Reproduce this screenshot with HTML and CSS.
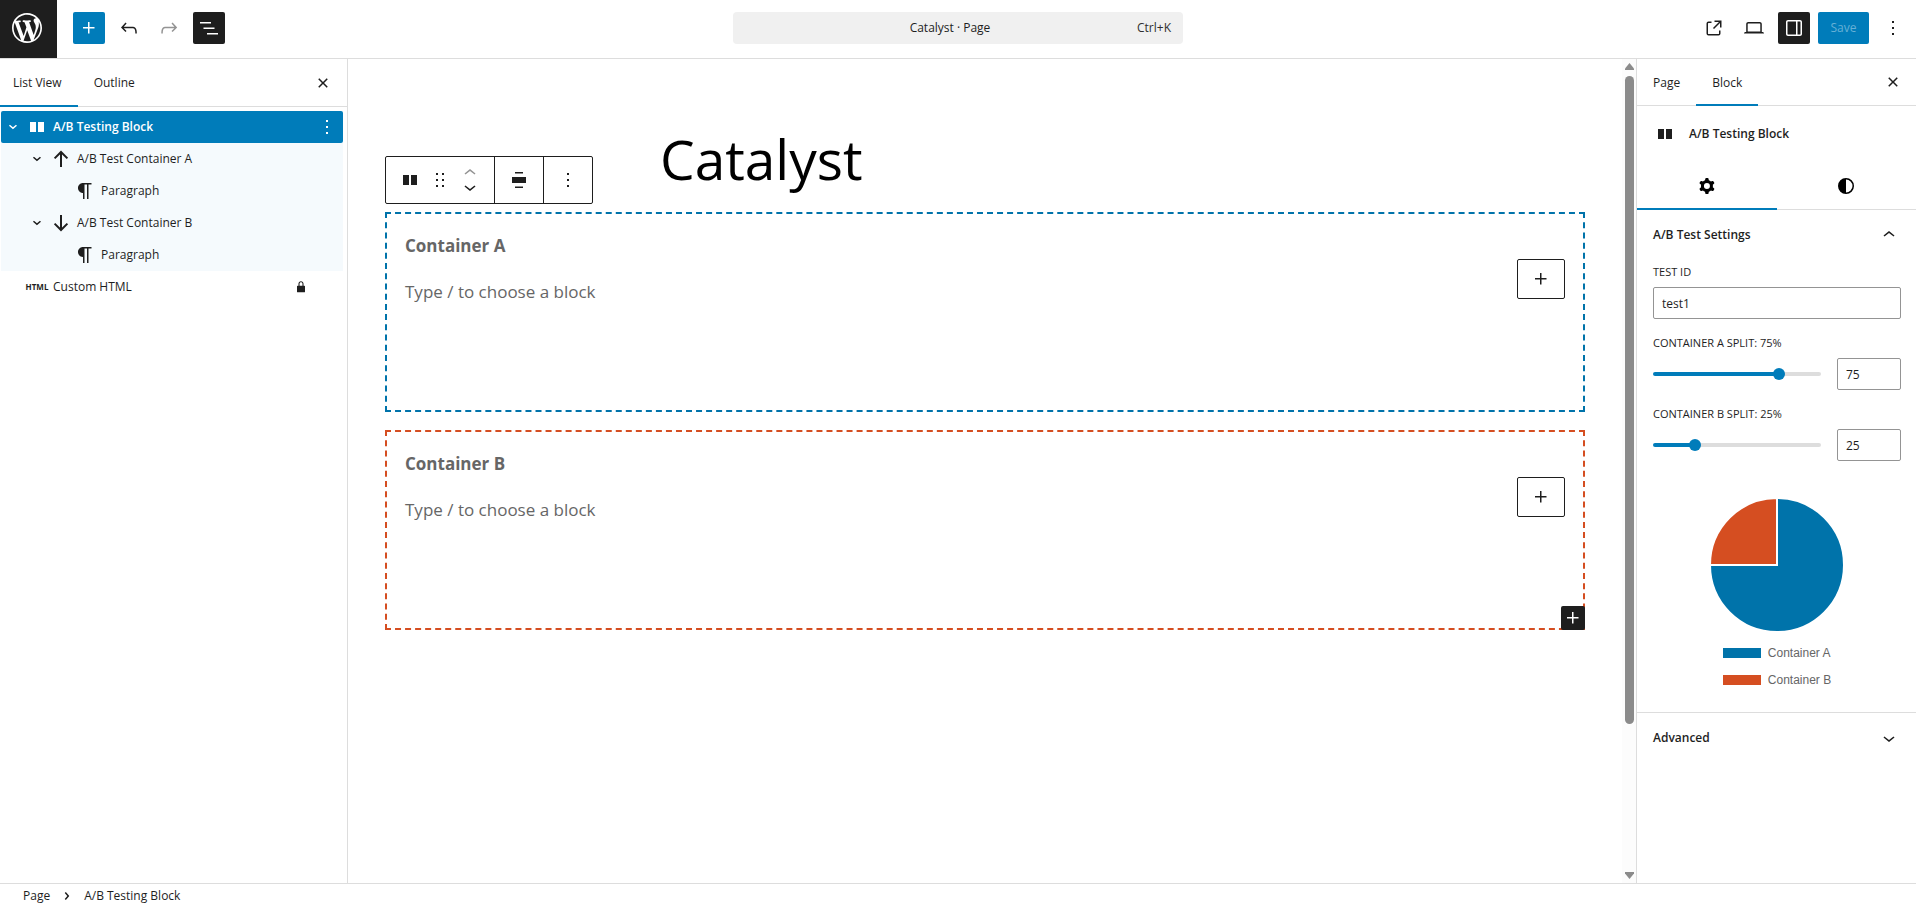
FILE: index.html
```
<!DOCTYPE html>
<html lang="en">
<head>
    <meta charset="UTF-8">
    <meta name="viewport" content="width=device-width, initial-scale=1.0">
    <title>Catalyst</title>
    <link rel="stylesheet" href="styles.css">
</head>
<body>
    <svg class="sprite" aria-hidden="true">
        <symbol id="plus" viewBox="0 0 24 24"><path d="M11 12.5V17.5H12.5V12.5H17.5V11H12.5V6H11V11H6V12.5H11Z"/></symbol>
        <symbol id="more" viewBox="0 0 24 24"><path d="M13 19h-2v-2h2v2zm0-6h-2v-2h2v2zm0-6h-2V5h2v2z"/></symbol>
        <symbol id="close" viewBox="0 0 24 24"><path d="M12 13.06l3.712 3.713 1.061-1.06L13.061 12l3.712-3.712-1.06-1.06L12 10.938 8.288 7.227l-1.061 1.06L10.939 12l-3.712 3.712 1.06 1.061L12 13.061z"/></symbol>
        <symbol id="columns" viewBox="0 0 20 20"><path d="M3 15h6V5H3v10zm8 0h6V5h-6v10z"/></symbol>
        <symbol id="paragraph" viewBox="0 0 24 24"><path d="m9.99609 14v-.2251l.00391.0001v6.225h1.5v-14.5h2.5v14.5h1.5v-14.5h3v-1.5h-8.50391c-2.76142 0-5 2.23858-5 5 0 2.7614 2.23858 5 5 5z"/></symbol>
        <symbol id="chevron-small" viewBox="0 0 24 24"><path d="M10.8622 8.04053L14.2805 12.0286L10.8622 16.0167L9.72327 15.0405L12.3049 12.0286L9.72327 9.01672L10.8622 8.04053Z"/></symbol>
        <symbol id="chevron-down" viewBox="0 0 24 24"><path d="M17.5 11.6L12 16l-5.5-4.4.9-1.2L12 14l4.5-3.6 1 1.2z"/></symbol>
        <symbol id="chevron-up" viewBox="0 0 24 24"><path d="M6.5 12.4L12 8l5.5 4.4-.9 1.2-4.6-3.6-4.5 3.6-1-1.2z"/></symbol>
        <symbol id="arrow" viewBox="0 0 24 24"><path d="M12 20V5M5.6 11.4 12 5l6.4 6.4" fill="none" stroke="currentColor" stroke-width="2"/></symbol>
    </svg>

    <header class="header">
        <div class="header-left">
            <a class="logo" href="#" aria-label="View Pages">
                <svg viewBox="0 0 20 20"><path d="M20 10c0-5.51-4.49-10-10-10C4.48 0 0 4.49 0 10c0 5.52 4.48 10 10 10 5.51 0 10-4.48 10-10zM7.78 15.37L4.37 6.22c.55-.02 1.17-.08 1.17-.08.5-.06.44-1.13-.06-1.11 0 0-1.45.11-2.37.11-.18 0-.37 0-.58-.01C4.12 2.69 6.87 1.11 10 1.11c2.33 0 4.45.87 6.05 2.34-.68-.11-1.65.39-1.65 1.58 0 .74.45 1.36.9 2.1.35.61.55 1.36.55 2.46 0 1.49-1.4 5-1.4 5l-3.03-8.37c.54-.02.82-.17.82-.17.5-.05.44-1.25-.06-1.22 0 0-1.44.12-2.38.12-.87 0-2.33-.12-2.33-.12-.5-.03-.56 1.2-.06 1.22l.92.08 1.26 3.41zM17.41 10c.24-.64.74-1.87.43-4.25.7 1.29 1.05 2.71 1.05 4.25 0 3.29-1.73 6.24-4.4 7.78.97-2.59 1.94-5.2 2.92-7.78zM6.1 18.09C3.12 16.65 1.11 13.53 1.11 10c0-1.3.23-2.48.72-3.59C3.25 10.3 4.67 14.2 6.1 18.09zm4.03-6.63l2.58 6.98c-.86.29-1.76.45-2.71.45-.79 0-1.57-.11-2.29-.33.81-2.38 1.62-4.74 2.42-7.1z"/></svg>
            </a>
            <div class="tools">
                <button class="icon-button primary" aria-label="Add block"><svg class="icon"><use href="#plus"/></svg></button>
                <button class="icon-button" aria-label="Undo"><svg class="icon" viewBox="0 0 24 24"><path d="M18.3 11.7c-.6-.6-1.4-.9-2.3-.9H6.7l2.9-3.3-1.1-1-4.5 5L8.5 16l1-1-2.7-2.7H16c.5 0 .9.2 1.3.5 1 1 1 3.4 1 4.5v.3h1.5v-.2c0-1.5 0-4.3-1.5-5.7z"/></svg></button>
                <button class="icon-button disabled" aria-label="Redo"><svg class="icon" viewBox="0 0 24 24"><path d="M15.6 6.5l-1.1 1 2.9 3.3H8c-.9 0-1.7.3-2.3.9-1.4 1.5-1.4 4.2-1.4 5.6v.2h1.5v-.3c0-1.1 0-3.5 1-4.5.3-.3.7-.5 1.3-.5h9.2L14.5 15l1.1 1.1 4.6-4.6-4.6-5z"/></svg></button>
                <button class="icon-button pressed" aria-label="Document Overview"><svg class="icon" viewBox="0 0 24 24"><path d="M3 6h11v1.5H3V6Zm3.5 5.5h11V13h-11v-1.5ZM21 17H10v1.5h11V17Z"/></svg></button>
            </div>
        </div>
        <button class="command">
            <span class="command-title">Catalyst · Page</span>
            <span class="shortcut">Ctrl+K</span>
        </button>
        <div class="header-right">
            <button class="icon-button" aria-label="View Page"><svg class="icon" viewBox="0 0 24 24"><path d="M19.5 4.5h-7V6h4.44l-5.97 5.97 1.06 1.06L18 7.06v4.44h1.5v-7Zm-13 1a2 2 0 0 0-2 2v10a2 2 0 0 0 2 2h10a2 2 0 0 0 2-2v-3H17v3a.5.5 0 0 1-.5.5h-10a.5.5 0 0 1-.5-.5v-10a.5.5 0 0 1 .5-.5h3V5.5h-3Z"/></svg></button>
            <button class="icon-button" aria-label="Preview"><svg class="icon" viewBox="0 0 24 24"><path d="M20.5 16h-.7V8c0-1.1-.9-2-2-2H6.2c-1.1 0-2 .9-2 2v8h-.7c-.8 0-1.5.7-1.5 1.5h20c0-.8-.7-1.5-1.5-1.5zM5.7 8c0-.3.2-.5.5-.5h11.6c.3 0 .5.2.5.5v7.6H5.7V8z"/></svg></button>
            <button class="icon-button pressed" aria-label="Settings"><svg class="icon" viewBox="0 0 24 24"><path d="M18 4H6c-1.1 0-2 .9-2 2v12c0 1.1.9 2 2 2h12c1.1 0 2-.9 2-2V6c0-1.1-.9-2-2-2zm-4 14.5H6c-.3 0-.5-.2-.5-.5V6c0-.3.2-.5.5-.5h8v13zm4.5-.5c0 .3-.2.5-.5.5h-2.5v-13H18c.3 0 .5.2.5.5v12z"/></svg></button>
            <button class="save">Save</button>
            <button class="icon-button" aria-label="Options"><svg class="icon"><use href="#more"/></svg></button>
        </div>
    </header>

    <div class="body">
        <aside class="list-panel">
            <div class="tabs">
                <button class="tab active">List View</button>
                <button class="tab">Outline</button>
                <button class="icon-button close" aria-label="Close"><svg class="icon"><use href="#close"/></svg></button>
            </div>
            <ul class="tree">
                <li class="row selected">
                    <button class="expander" aria-label="Collapse"><svg class="icon"><use href="#chevron-small"/></svg></button>
                    <a href="#"><span class="row-icon"><svg class="icon-20"><use href="#columns"/></svg></span>A/B Testing Block</a>
                    <button class="row-menu" aria-label="Options"><svg class="icon"><use href="#more"/></svg></button>
                </li>
                <li class="row branch level-2">
                    <button class="expander" aria-label="Collapse"><svg class="icon"><use href="#chevron-small"/></svg></button>
                    <a href="#"><span class="row-icon"><svg class="icon"><use href="#arrow"/></svg></span>A/B Test Container A</a>
                </li>
                <li class="row branch level-3">
                    <a href="#"><span class="row-icon"><svg class="icon"><use href="#paragraph"/></svg></span>Paragraph</a>
                </li>
                <li class="row branch level-2">
                    <button class="expander" aria-label="Collapse"><svg class="icon"><use href="#chevron-small"/></svg></button>
                    <a href="#"><span class="row-icon"><svg class="icon flip"><use href="#arrow"/></svg></span>A/B Test Container B</a>
                </li>
                <li class="row branch level-3">
                    <a href="#"><span class="row-icon"><svg class="icon"><use href="#paragraph"/></svg></span>Paragraph</a>
                </li>
                <li class="row leaf">
                    <a href="#"><span class="row-icon html-icon">HTML</span>Custom HTML</a>
                    <svg class="lock" viewBox="0 0 24 24"><path d="M17 10h-1.2V7c0-2.1-1.7-3.8-3.8-3.8-2.1 0-3.8 1.7-3.8 3.8v3H7c-.6 0-1 .4-1 1v8c0 .6.4 1 1 1h10c.6 0 1-.4 1-1v-8c0-.6-.4-1-1-1zM9.8 7c0-1.2 1-2.2 2.2-2.2 1.2 0 2.2 1 2.2 2.2v3H9.8V7z"/></svg>
                </li>
            </ul>
        </aside>

        <main class="canvas">
            <div class="page">
                <h1 class="page-title">Catalyst</h1>
                <div class="ab-block">
                    <div class="block-toolbar">
                        <div class="group">
                            <button class="block-type" aria-label="A/B Testing Block"><svg class="icon-20"><use href="#columns"/></svg></button>
                            <button class="drag" aria-label="Drag"><svg class="icon" viewBox="0 0 24 24"><path d="M8 7h2V5H8v2zm0 6h2v-2H8v2zm0 6h2v-2H8v2zm6-14v2h2V5h-2zm0 8h2v-2h-2v2zm0 6h2v-2h-2v2z"/></svg></button>
                            <div class="movers">
                                <button class="disabled" aria-label="Move up"><svg class="icon"><use href="#chevron-up"/></svg></button>
                                <button aria-label="Move down"><svg class="icon"><use href="#chevron-down"/></svg></button>
                            </div>
                        </div>
                        <div class="group">
                            <button aria-label="Align"><svg class="icon" viewBox="0 0 24 24"><path d="M8 4h8v1.5H8zM5 9h14v6H5zM8 18.5h8V20H8z"/></svg></button>
                        </div>
                        <div class="group">
                            <button aria-label="Options"><svg class="icon"><use href="#more"/></svg></button>
                        </div>
                    </div>
                    <section class="container container-a">
                        <div>
                            <h2>Container A</h2>
                            <p>Type / to choose a block</p>
                        </div>
                        <button class="add-block" aria-label="Add block"><svg class="icon"><use href="#plus"/></svg></button>
                    </section>
                    <section class="container container-b">
                        <div>
                            <h2>Container B</h2>
                            <p>Type / to choose a block</p>
                        </div>
                        <button class="add-block" aria-label="Add block"><svg class="icon"><use href="#plus"/></svg></button>
                    </section>
                    <button class="appender" aria-label="Add block"><svg class="icon"><use href="#plus"/></svg></button>
                </div>
            </div>
            <div class="scrollbar" aria-hidden="true">
                <svg viewBox="0 0 9 7"><path d="M4.5 0 9 5.5V7H0V5.5z"/></svg>
                <div class="track"><div class="thumb"></div></div>
                <svg viewBox="0 0 9 7"><path d="M4.5 7 9 1.5V0H0v1.5z"/></svg>
            </div>
        </main>

        <aside class="settings">
            <div class="tabs">
                <button class="tab">Page</button>
                <button class="tab active">Block</button>
                <button class="icon-button close" aria-label="Close Settings"><svg class="icon"><use href="#close"/></svg></button>
            </div>
            <div class="block-card">
                <svg class="icon-20"><use href="#columns"/></svg>
                <h2>A/B Testing Block</h2>
            </div>
            <div class="sub-tabs">
                <button class="active" aria-label="Settings"><svg class="icon" viewBox="0 0 24 24"><path fill-rule="evenodd" d="M10.289 4.836A1 1 0 0111.275 4h1.306a1 1 0 01.987.836l.244 1.466c.787.26 1.503.679 2.108 1.218l1.393-.522a1 1 0 011.216.437l.653 1.13a1 1 0 01-.23 1.273l-1.148.944a6.025 6.025 0 010 2.435l1.149.946a1 1 0 01.23 1.272l-.653 1.13a1 1 0 01-1.216.437l-1.394-.522c-.605.54-1.32.958-2.108 1.218l-.244 1.466a1 1 0 01-.987.836h-1.306a1 1 0 01-.986-.836l-.244-1.466a5.995 5.995 0 01-2.108-1.218l-1.394.522a1 1 0 01-1.217-.436l-.653-1.131a1 1 0 01.23-1.272l1.149-.946a6.026 6.026 0 010-2.435l-1.148-.944a1 1 0 01-.23-1.272l.653-1.131a1 1 0 011.217-.437l1.393.522a5.994 5.994 0 012.108-1.218l.244-1.466zM14.929 12a3 3 0 11-6 0 3 3 0 016 0z"/></svg></button>
                <button aria-label="Styles"><svg class="icon" viewBox="0 0 24 24"><path fill-rule="evenodd" d="M20 12a8 8 0 1 1-16 0 8 8 0 0 1 16 0Zm-1.5 0a6.5 6.5 0 0 1-6.5 6.5v-13a6.5 6.5 0 0 1 6.5 6.5Z"/></svg></button>
            </div>
            <div class="panel">
                <button class="panel-title">A/B Test Settings<svg class="icon"><use href="#chevron-up"/></svg></button>
                <div class="panel-body">
                    <div class="field">
                        <label for="test-id">Test ID</label>
                        <input type="text" class="input" id="test-id" value="test1">
                    </div>
                    <div class="field">
                        <label for="split-a">Container A Split: 75%</label>
                        <div class="range-row">
                            <div class="range" style="--value: 75%"><input type="range" id="split-a" min="0" max="100" value="75"></div>
                            <input type="text" class="input number" inputmode="numeric" aria-label="Container A split" value="75">
                        </div>
                    </div>
                    <div class="field">
                        <label for="split-b">Container B Split: 25%</label>
                        <div class="range-row">
                            <div class="range" style="--value: 25%"><input type="range" id="split-b" min="0" max="100" value="25"></div>
                            <input type="text" class="input number" inputmode="numeric" aria-label="Container B split" value="25">
                        </div>
                    </div>
                    <div class="chart">
                        <svg class="pie" viewBox="0 0 134 134">
                            <path class="slice-a" d="M67 67V0A67 67 0 1 1 0 67Z"/>
                            <path class="slice-b" d="M67 67H0A67 67 0 0 1 67 0Z"/>
                        </svg>
                        <ul class="legend">
                            <li><span class="swatch swatch-a"></span>Container A</li>
                            <li><span class="swatch swatch-b"></span>Container B</li>
                        </ul>
                    </div>
                </div>
            </div>
            <div class="panel">
                <button class="panel-title">Advanced<svg class="icon"><use href="#chevron-down"/></svg></button>
            </div>
        </aside>
    </div>

    <footer class="footer">
        <a href="#">Page</a>
        <svg class="icon"><use href="#chevron-small"/></svg>
        <a href="#">A/B Testing Block</a>
    </footer>
</body>
</html>
```
FILE: styles.css
```
* {
    box-sizing: border-box;
}

body {
    margin: 0;
    height: 100vh;
    display: flex;
    flex-direction: column;
    overflow: hidden;
    background: #fff;
    color: #1e1e1e;
    font-family: "Open Sans", "Noto Sans", sans-serif;
    font-size: 12px;
    line-height: 16px;
}

button,
input {
    font: inherit;
    color: inherit;
}

button {
    display: flex;
    align-items: center;
    justify-content: center;
    padding: 0;
    border: 0;
    background: none;
    cursor: pointer;
}

a {
    color: inherit;
    text-decoration: none;
}

h1,
h2,
p,
ul {
    margin: 0;
    padding: 0;
}

ul {
    list-style: none;
}

svg {
    fill: currentColor;
    flex-shrink: 0;
}

.sprite {
    position: absolute;
    width: 0;
    height: 0;
}

.icon {
    width: 24px;
    height: 24px;
}

.icon-20 {
    width: 20px;
    height: 20px;
}

.flip {
    transform: rotate(180deg);
}

.icon-button {
    width: 32px;
    height: 32px;
    border-radius: 2px;
}

.primary {
    background: #007cba;
    color: #fff;
}

.pressed {
    background: #1e1e1e;
    color: #fff;
}

.disabled {
    color: #949494;
}

/* Header */
.header {
    display: grid;
    grid-template-columns: 1fr 450px 1fr;
    align-items: start;
    border-bottom: 1px solid #ddd;
}

.header-left {
    display: flex;
    align-items: flex-start;
    gap: 16px;
}

.logo {
    width: 57px;
    height: 58px;
    padding: 13px 0 0 12px;
    background: #1e1e1e;
    color: #fff;
}

.logo svg {
    display: block;
    width: 30px;
    height: 30px;
}

.tools {
    display: flex;
    gap: 8px;
    padding-top: 12px;
}

.command {
    height: 32px;
    margin-top: 12px;
    padding: 0 12px 0 30px;
    border-radius: 4px;
    background: #f0f0f0;
}

.command-title {
    flex: 1;
}

.shortcut {
    color: #2f2f2f;
}

.header-right {
    display: flex;
    justify-content: flex-end;
    gap: 8px;
    padding: 12px 7px 0 0;
}

.save {
    width: 51px;
    height: 32px;
    border-radius: 2px;
    background: #007cba;
    color: #66b0d6;
}

/* Layout */
.body {
    flex: 1;
    display: flex;
    min-height: 0;
}

.list-panel {
    width: 348px;
    border-right: 1px solid #ddd;
}

.settings {
    width: 280px;
    border-left: 1px solid #ddd;
}

/* Tabs */
.tabs {
    display: flex;
    align-items: center;
    height: 48px;
    border-bottom: 1px solid #ddd;
}

.settings .tabs {
    height: 47px;
}

.tab {
    align-self: stretch;
    margin-bottom: -1px;
    padding: 0 16px;
    border-bottom: 2px solid transparent;
    border-top: 2px solid transparent;
}

.list-panel .tab:first-child {
    padding-left: 13px;
}

.tab.active {
    border-bottom-color: #007cba;
}

.close {
    margin: 0 8px 0 auto;
}

.settings .close {
    margin-right: 7px;
}

/* List view */
.tree {
    padding: 4px 4px 0 1px;
}

.row {
    display: flex;
    align-items: center;
    height: 32px;
}

.row a {
    flex: 1;
    display: flex;
    align-items: center;
    gap: 4px;
}

.row.selected {
    border-radius: 2px;
    background: #007cba;
    color: #fff;
    font-weight: 600;
}

.branch {
    background: #f5fafd;
}

.level-2 {
    padding-left: 24px;
}

.level-3 {
    padding-left: 72px;
}

.leaf {
    padding-left: 24px;
}

.expander {
    width: 24px;
    height: 24px;
}

.expander svg {
    transform: rotate(90deg);
}

.row-icon {
    display: flex;
    justify-content: center;
    width: 24px;
}

.html-icon {
    font-size: 8px;
    font-weight: 700;
}

.row-menu {
    margin-right: 4px;
}

.lock {
    width: 16px;
    height: 16px;
    margin-right: 34px;
}

/* Canvas */
.canvas {
    flex: 1;
    display: flex;
    min-width: 0;
}

.page {
    flex: 1;
    padding: 64px 37px 0;
    min-width: 0;
}

.page-title {
    max-width: 650px;
    margin: 0 auto;
    color: #000;
    font-size: 55px;
    font-weight: 400;
    line-height: 72px;
}

.ab-block {
    position: relative;
    display: grid;
    gap: 18px;
    max-width: 1200px;
    margin: 17px auto 0;
}

/* floats above the selected block */
.block-toolbar {
    position: absolute;
    bottom: calc(100% + 8px);
    left: 0;
    display: flex;
    height: 48px;
    border: 1px solid #1e1e1e;
    border-radius: 2px;
    background: #fff;
}

.group {
    display: flex;
    align-items: center;
}

.group + .group {
    border-left: 1px solid #1e1e1e;
}

.group > button {
    width: 48px;
    height: 46px;
}

.group > .block-type {
    width: 36px;
    margin-left: 6px;
}

.group > .drag {
    width: 24px;
}

.movers {
    padding-right: 6px;
}

.movers button {
    width: 36px;
    height: 14px;
}

.container {
    display: flex;
    justify-content: space-between;
    min-height: 200px;
    padding: 18px;
    border: 2px dashed;
}

.container-a {
    border-color: #0073aa;
}

.container-b {
    border-color: #d54e21;
}

.container h2,
.container p {
    color: #666;
    font-size: 17px;
    line-height: 28px;
}

.container p {
    margin-top: 18px;
}

.add-block {
    width: 48px;
    height: 40px;
    margin-top: 27px;
    border: 1px solid #1e1e1e;
    border-radius: 2px;
}

/* sits on the corner of the last container */
.appender {
    position: absolute;
    right: 0;
    bottom: 0;
    border-radius: 2px;
    background: #1e1e1e;
    color: #fff;
}

.scrollbar {
    display: flex;
    flex-direction: column;
    align-items: center;
    gap: 6px;
    width: 14px;
    padding: 4px 0;
    background: #fcfcfc;
    color: #8b8b8b;
}

.scrollbar svg {
    width: 9px;
    height: 7px;
}

.track {
    flex: 1;
    width: 9px;
}

.thumb {
    height: 82%;
    border-radius: 5px;
    background: #8b8b8b;
}

/* Settings sidebar */
.block-card {
    display: flex;
    align-items: center;
    gap: 14px;
    padding: 16px 18px;
}

.block-card h2 {
    font-size: 12px;
    font-weight: 600;
    line-height: 24px;
}

.sub-tabs {
    display: grid;
    grid-template-columns: 1fr 1fr;
    height: 48px;
    border-bottom: 1px solid #ddd;
    color: #000;
}

.sub-tabs button {
    margin-bottom: -1px;
    border-top: 2px solid transparent;
    border-bottom: 2px solid transparent;
}

.sub-tabs .active {
    border-bottom-color: #007cba;
}

.panel {
    padding: 0 15px 0 16px;
    border-bottom: 1px solid #ddd;
}

.panel:last-child {
    border-bottom: 0;
}

.panel-title {
    justify-content: space-between;
    width: 100%;
    height: 50px;
    font-weight: 600;
}

.panel-body {
    padding: 4px 0 24px;
}

.field {
    margin-bottom: 16px;
}

.field label {
    display: block;
    margin-bottom: 7px;
    font-size: 11px;
    font-weight: 500;
    text-transform: uppercase;
}

.input {
    display: block;
    width: 100%;
    height: 32px;
    padding: 0 8px;
    border: 1px solid #949494;
    border-radius: 2px;
    background: #fff;
}

.range-row {
    display: flex;
    align-items: center;
    gap: 16px;
}

.input.number {
    width: 64px;
}

.range {
    flex: 1;
    display: grid;
    align-items: center;
    min-width: 0;
}

.range::before {
    content: "";
    grid-area: 1 / 1;
    height: 4px;
    border-radius: 2px;
    background: linear-gradient(to right, #007cba var(--value), #ddd var(--value));
}

/* thumb centre travels the full length of the rail */
.range input {
    grid-area: 1 / 1;
    width: calc(100% + 12px);
    height: 12px;
    margin: 0 -6px;
    background: none;
    -webkit-appearance: none;
    appearance: none;
}

.range input::-webkit-slider-thumb {
    -webkit-appearance: none;
    width: 12px;
    height: 12px;
    border-radius: 50%;
    background: #007cba;
}

.chart {
    display: flex;
    flex-direction: column;
    align-items: center;
    padding-top: 21px;
}

.pie {
    width: 134px;
    height: 134px;
    stroke: #fff;
    stroke-width: 2;
}

.slice-a {
    fill: #0073aa;
}

.slice-b {
    fill: #d54e21;
}

.legend {
    display: grid;
    gap: 11px;
    margin-top: 13px;
    color: #666;
    font-family: "Liberation Sans", Arial, sans-serif;
}

.legend li {
    display: flex;
    align-items: center;
    gap: 7px;
}

.swatch {
    width: 38px;
    height: 10px;
}

.swatch-a {
    background: #0073aa;
}

.swatch-b {
    background: #d54e21;
}

/* Breadcrumb */
.footer {
    display: flex;
    align-items: center;
    gap: 5px;
    height: 23px;
    padding: 2px 23px 0;
    border-top: 1px solid #ddd;
}
```
